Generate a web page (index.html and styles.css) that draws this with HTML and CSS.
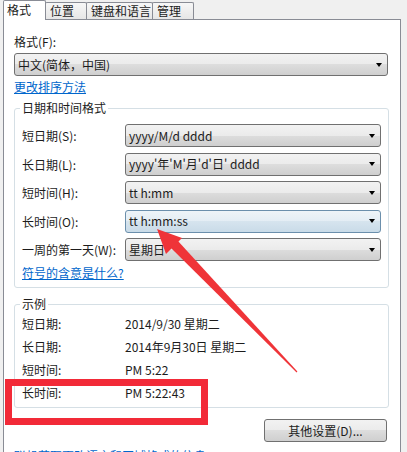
FILE: index.html
```html
<!DOCTYPE html>
<html lang="zh-CN">
<head>
<meta charset="utf-8">
<title>区域和语言</title>
<link rel="stylesheet" href="styles.css">
</head>
<body>
<div class="tabs">
  <div class="tab active t1">格式</div>
  <div class="tab t2">位置</div>
  <div class="tab t3">键盘和语言</div>
  <div class="tab t4">管理</div>
</div>
<div class="panel">
  <div class="label">格式(F):</div>
  <div class="combo wide"><span>中文(简体，中国)</span><i class="caret"></i></div>
  <a class="link l1">更改排序方法</a>

  <div class="group g1">
    <div class="legend">日期和时间格式</div>
    <div class="rows">
      <div class="row"><span class="rlabel">短日期(S):</span><div class="combo"><span>yyyy/M/d dddd</span><i class="caret"></i></div></div>
      <div class="row"><span class="rlabel">长日期(L):</span><div class="combo"><span>yyyy'年'M'月'd'日' dddd</span><i class="caret"></i></div></div>
      <div class="row"><span class="rlabel">短时间(H):</span><div class="combo"><span>tt h:mm</span><i class="caret"></i></div></div>
      <div class="row"><span class="rlabel">长时间(O):</span><div class="combo hot"><span>tt h:mm:ss</span><i class="caret"></i></div></div>
      <div class="row"><span class="rlabel">一周的第一天(W):</span><div class="combo"><span>星期日</span><i class="caret"></i></div></div>
    </div>
    <a class="link l2">符号的含意是什么?</a>
  </div>

  <div class="group g2">
    <div class="legend">示例</div>
    <div class="samples">
      <div class="sample"><span class="slabel">短日期:</span><span>2014/9/30 星期二</span></div>
      <div class="sample"><span class="slabel">长日期:</span><span>2014年9月30日 星期二</span></div>
      <div class="sample"><span class="slabel">短时间:</span><span>PM 5:22</span></div>
      <div class="sample"><span class="slabel">长时间:</span><span>PM 5:22:43</span></div>
    </div>
  </div>

  <div class="btnrow"><div class="button">其他设置(D)...</div></div>
  <a class="link l3">联机获取更改语言和区域格式的信息</a>
</div>

<div class="redbox"></div>
<svg class="arrow" width="407" height="452" viewBox="0 0 407 452">
  <polygon points="157,229 182,238 166,254" fill="#ef3438"/>
  <polygon points="177.5,240.5 170.5,247.5 296.6,372.4 297.4,371.6" fill="#ef3438"/>
</svg>
</body>
</html>
```

FILE: styles.css
```css
* { box-sizing: border-box; }

body {
  margin: 0;
  width: 407px;
  height: 452px;
  overflow: hidden;
  position: relative;
  background: #f0f0f0;
  font-family: "Noto Sans CJK SC", "Microsoft YaHei", sans-serif;
  font-size: 12px;
  color: #1c1c1c;
}

/* tabs */
.tabs {
  display: flex;
  align-items: flex-end;
  height: 19px;
  padding-left: 3px;
  position: relative;
  z-index: 2;
}
.tab {
  height: 17px;
  line-height: 16px;
  border: 1px solid #898c95;
  border-bottom: none;
  margin-right: -1px;
  padding-left: 4px;
  background: linear-gradient(#f7f7f7, #e6e6e6);
  border-radius: 2px 2px 0 0;
  white-space: nowrap;
}
.tab.active {
  height: 20px;
  margin-bottom: -1px;
  background: #fff;
  padding-left: 3px;
  padding-top: 1px;
  position: relative;
  z-index: 3;
}
.t1 { width: 43px; }
.t2 { width: 42px; }
.t3 { width: 67px; }
.t4 { width: 42px; }

/* panel */
.panel {
  margin-left: 3px;
  width: 398px;
  height: 470px;
  border: 1px solid #898c95;
  background: #fff;
  padding: 14px 0 0 10px;
}

.label { line-height: 16px; }

.link {
  display: block;
  width: fit-content;
  line-height: 16px;
  color: #0066cc;
  text-decoration: underline;
}
.l1 { margin-top: 3px; }
.l2 { margin-top: 4px; }
.l3 { margin-top: 6px; }

/* combo boxes */
.combo {
  display: flex;
  align-items: center;
  justify-content: space-between;
  height: 23px;
  border: 1px solid #707070;
  border-radius: 3px;
  padding: 0 5px 0 3px;
  background: linear-gradient(#f2f2f2 0%, #ebebeb 50%, #dddddd 50%, #cfcfcf 100%);
  white-space: nowrap;
  line-height: 16px;
}
.combo.wide { width: 374px; margin-top: 3px; }
.combo.hot {
  border-color: #6b8fac;
  background: linear-gradient(#eef4f8 0%, #e3edf4 50%, #d6e4ee 50%, #c9dbe8 100%);
}
.caret {
  width: 0;
  height: 0;
  border-left: 3.5px solid transparent;
  border-right: 3.5px solid transparent;
  border-top: 4px solid #000;
}

/* group boxes */
.group {
  width: 375px;
  border: 1px solid #d5dfe5;
  border-radius: 3px;
  padding: 0 7px 6px 7px;
}
.g1 { margin-top: 13px; }
.g2 { margin-top: 16px; padding-bottom: 3px; }

.legend {
  width: fit-content;
  line-height: 16px;
  margin-top: -9px;
  margin-left: -2px;
  padding: 0 2px;
  background: #fff;
}

.rows {
  display: flex;
  flex-direction: column;
  gap: 5.6px;
  margin-top: 8px;
}
.row {
  display: flex;
  align-items: center;
}
.rlabel { width: 103px; white-space: nowrap; }
.row .combo { width: 256px; }

.samples { display: flex; flex-direction: column; }
.sample {
  display: flex;
  line-height: 23px;
  white-space: nowrap;
}
.slabel { width: 103px; }

/* button */
.btnrow {
  display: flex;
  justify-content: flex-end;
  width: 375px;
  padding-right: 2px;
  margin-top: 11px;
}
.button {
  width: 123px;
  height: 23px;
  border: 1px solid #707070;
  border-radius: 3px;
  background: linear-gradient(#f2f2f2 0%, #ebebeb 50%, #dddddd 50%, #cfcfcf 100%);
  display: flex;
  align-items: center;
  justify-content: center;
  line-height: 16px;
}

/* annotations */
.redbox {
  position: absolute;
  left: 5px;
  top: 379px;
  width: 203px;
  height: 46px;
  border: 7px solid #f22a38;
}
.arrow {
  position: absolute;
  left: 0;
  top: 0;
  pointer-events: none;
}
```
